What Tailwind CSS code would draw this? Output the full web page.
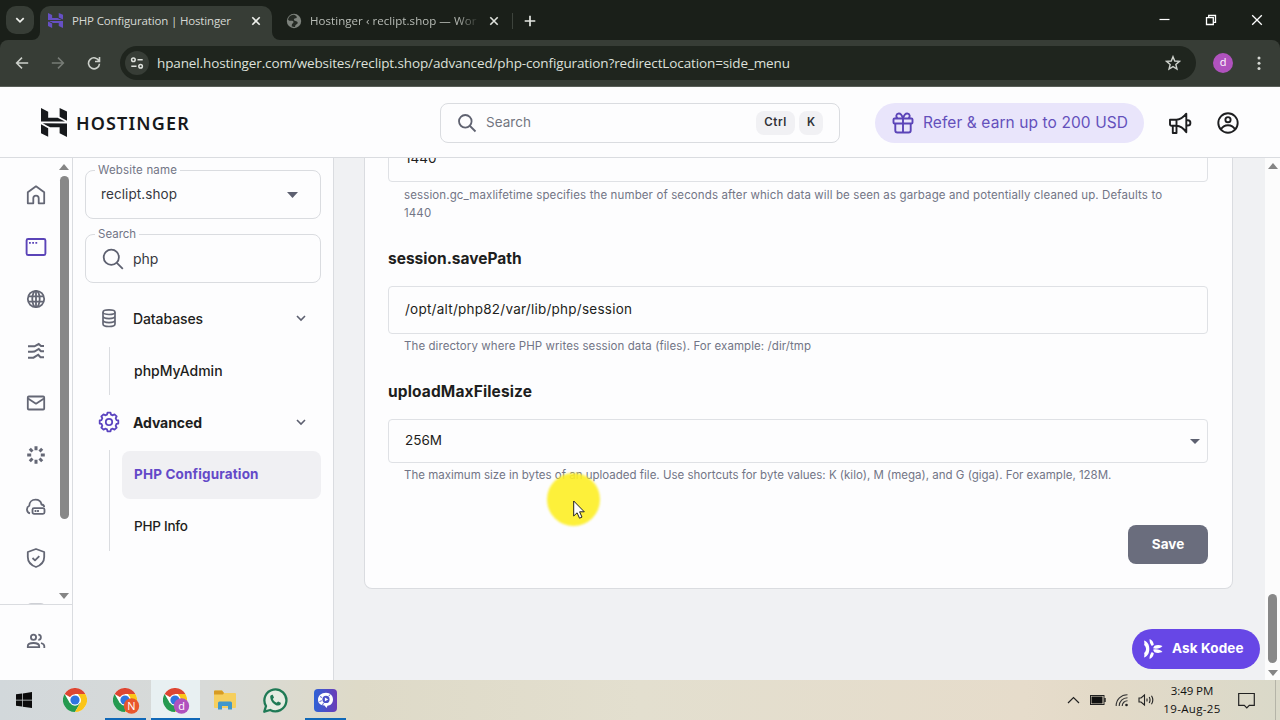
<!DOCTYPE html>
<html lang="en">
<head>
<meta charset="utf-8">
<title>PHP Configuration | Hostinger</title>
<script src="https://cdn.jsdelivr.net/npm/@tailwindcss/browser@4"></script>
</head>
<body class="flex h-[720px] w-[1280px] flex-col overflow-hidden bg-[#fdfdfe] font-['Inter',sans-serif] text-[#1d1e20]">

<!-- Tab strip -->
<div class="flex h-10 shrink-0 items-end bg-[#1a1f19] font-['Open_Sans',sans-serif] text-[11.5px] text-[#d6d9d4]">
  <div class="mb-1.5 ml-1.5 flex size-7 shrink-0 items-center justify-center rounded-[10px] bg-[#373d36]">
    <svg class="size-3" viewBox="0 0 12 12" fill="none" stroke="#eef0ec" stroke-width="1.7"><path d="M2.3 4.2 6 7.9l3.700-3.700"/></svg>
  </div>
  <svg class="-ml-0.5 h-2 w-2" viewBox="0 0 8 8" fill="#373d36"><path d="M8 0v8H0a8 8 0 0 0 8-8Z"/></svg>
  <div class="flex h-[34px] w-[232px] shrink-0 items-center rounded-t-[10px] bg-[#373d36] pb-[5px] pl-2">
    <svg class="h-[15px] w-[15px]" viewBox="1.8 0 20.4 24" preserveAspectRatio="none" fill="#6650c4"><path d="M16.415 0v7.16l5.785 3.384V2.949L16.415 0ZM1.8 0v11.237h18.815L14.89 8.09l-7.457-.003V3.024L1.8 0Zm14.615 20.894v-5.019l-7.514-.005c.007.033-5.82-3.197-5.82-3.197l19.119.091V24l-5.785-3.106ZM1.8 13.551v7.343l5.633 2.949v-6.988L1.8 13.551Z"/></svg>
    <span class="ml-[9px] w-[174px] whitespace-nowrap tracking-[-0.15px]">PHP Configuration | Hostinger</span>
    <svg class="ml-1 size-3" viewBox="0 0 12 12" stroke="#eef0ec" stroke-width="1.6"><path d="m2.3 2.3 7.4 7.4M9.7 2.3 2.3 9.7"/></svg>
  </div>
  <svg class="h-2 w-2" viewBox="0 0 8 8" fill="#373d36"><path d="M0 0v8h8a8 8 0 0 1-8-8Z"/></svg>
  <div class="ml-1.5 flex h-[34px] items-center pb-[5px]">
    <svg class="size-4" viewBox="0 0 16 16"><circle cx="8" cy="8" r="7.2" fill="#7d827c"/><path d="M7.2 1.8C5 2 2.6 3.6 2 6.4c.9 1.3 2.4 1.6 3.6 1.4.9-.2 1.6.2 1.9 1 .2.9-.4 1.4-1.2 1.9-.6.5-.3 1.6-.7 2.6 1 .6 2.5.8 3.4.6.2-1.7.9-2.4 2-2.9 1-.5.9-2-.1-2.5-.9-.5-1.900-.2-2.600-.9-.7-.8-.5-1.800.3-2.200.9-.4 1.800-.1 2.200-1C11.100 3.300 9 1.700 7.200 1.800Z" fill="#252a24"/></svg>
    <span class="ml-2 w-[170px] overflow-hidden whitespace-nowrap tracking-[0.06px] text-[#b9bdb7] [mask-image:linear-gradient(to_right,black_86%,transparent_100%)]">Hostinger ‹ reclipt.shop — Wor</span>
    <svg class="ml-2 size-3" viewBox="0 0 12 12" stroke="#dfe2dd" stroke-width="1.6"><path d="m2.300 2.300 7.400 7.400M9.700 2.300 2.300 9.700"/></svg>
    <div class="ml-3 h-4 w-px bg-[#3d433c]"></div>
    <svg class="ml-[10px] size-[14px]" viewBox="0 0 14 14" stroke="#e3e6e1" stroke-width="1.7"><path d="M7 1.700v10.600M1.700 7h10.600"/></svg>
  </div>
  <div class="ml-auto flex h-10 items-center pr-[17px]">
    <svg class="h-3 w-[11px]" viewBox="0 0 11 12" stroke="#fff" stroke-width="1.2"><path d="M.5 5.500h10"/></svg>
    <svg class="ml-[35px] size-3" viewBox="0 0 12 12" fill="none" stroke="#fff" stroke-width="1.3"><path d="M1.500 3.700h6.800v6.800H1.500zM3.700 3.500V1.500h6.800v6.800H8.500"/></svg>
    <svg class="ml-[34px] size-3" viewBox="0 0 12 12" stroke="#fff" stroke-width="1.3"><path d="m1.200 1.200 9.600 9.600M10.800 1.200l-9.600 9.600"/></svg>
  </div>
</div>

<!-- Toolbar -->
<div class="bg-[#1a1f19]">
<div class="flex h-[47px] items-center rounded-t-lg border-b border-[#595e58] bg-[#373d36] pl-[15px]">
  <svg class="size-[14px]" viewBox="0 0 14 14" fill="none" stroke="#cdd1cb" stroke-width="1.5"><path d="M13.200 7H1.800M7 1.600 1.600 7 7 12.400"/></svg>
  <svg class="ml-[22px] size-[14px]" viewBox="0 0 14 14" fill="none" stroke="#777c76" stroke-width="1.5"><path d="M.8 7h11.400M7 1.600 12.400 7 7 12.400"/></svg>
  <svg class="ml-[22px] size-[14px]" viewBox="0 0 14 14" fill="none" stroke="#cdd1cb" stroke-width="1.6"><path d="M12.100 5.200A5.500 5.500 0 1 0 12.500 7.700M12.500 1v4.500H8"/></svg>
  <div class="ml-[19px] flex h-[34px] w-[1076px] items-center rounded-full bg-[#1f251e] pl-[5px] pr-4">
    <div class="flex size-6 items-center justify-center rounded-full bg-[#373d36]">
      <svg class="size-[14px]" viewBox="0 0 14 14" fill="none" stroke="#dfe2dd" stroke-width="1.5"><circle cx="3.4" cy="3.7" r="1.8"/><path d="M7.500 3.700h5.200M1.300 10.300h5.200"/><circle cx="10.6" cy="10.3" r="1.8"/></svg>
    </div>
    <span class="ml-2 whitespace-nowrap font-['Open_Sans',sans-serif] text-[13.5px] tracking-[-0.122px] text-[#dde0db]">hpanel.hostinger.com/websites/reclipt.shop/advanced/php-configuration?redirectLocation=side_menu</span>
    <svg class="-mr-px ml-auto size-4" viewBox="0 0 16 16" fill="none" stroke="#cdd1cb" stroke-width="1.4"><path d="m8 1.700 1.750 4.350 4.650.35-3.550 3.050 1.100 4.550L8 11.550 4.050 14l1.100-4.550L1.600 6.400l4.650-.35z"/></svg>
  </div>
  <div class="ml-[17px] flex size-5 items-center justify-center rounded-full bg-[#b052be] pb-px font-['Open_Sans',sans-serif] text-[11px] text-white">d</div>
  <svg class="ml-[18px] h-4 w-[15px]" viewBox="0 0 15 16" fill="#d5d8d3"><circle cx="8" cy="3" r="1.5"/><circle cx="8" cy="8.2" r="1.5"/><circle cx="8" cy="13.4" r="1.5"/></svg>
</div>
</div>

<!-- Site header -->
<header class="flex h-[71px] shrink-0 items-center border-b border-[#dadce0] bg-[#fdfdfe] pl-10 pt-px">
  <div class="flex w-[400px] items-center">
    <svg class="ml-px h-[29px] w-[26px]" viewBox="1.8 0 20.4 24" preserveAspectRatio="none" fill="#17191c"><path d="M16.415 0v7.160l5.785 3.384V2.949L16.415 0ZM1.800 0v11.237h18.815L14.890 8.090l-7.457-.003V3.024L1.800 0Zm14.615 20.894v-5.019l-7.514-.005c.007.033-5.820-3.197-5.820-3.197l19.119.091V24l-5.785-3.106ZM1.800 13.551v7.343l5.633 2.949v-6.988L1.800 13.551Z"/></svg>
    <span class="ml-[9px] font-['Noto_Sans',sans-serif] text-[18px] font-semibold leading-6 tracking-[1.15px] text-[#17191c]">HOSTINGER</span>
  </div>
  <div class="flex h-10 w-[400px] items-center rounded-lg border border-[#dadce0] px-4">
    <svg class="size-5" viewBox="0 0 20 20" fill="none" stroke="#5f6270" stroke-width="1.8"><circle cx="8.3" cy="8.3" r="6.3"/><path d="m13 13 5.500 5.500"/></svg>
    <span class="ml-[9px] text-[13.5px] tracking-[0.04px] text-[#727580]">Search</span>
    <span class="ml-auto flex h-6 items-center rounded-lg bg-[#f1f1f4] px-2 text-[11.5px] font-semibold tracking-[0.6px] text-[#303238]">Ctrl</span>
    <span class="ml-1 flex size-6 items-center justify-center rounded-lg bg-[#f1f1f4] text-[11.5px] font-semibold text-[#303238]">K</span>
  </div>
  <div class="ml-[35px] flex h-10 w-[269px] items-center rounded-full bg-[#e9e5fb] pl-4 text-[#6450bb]">
    <svg class="size-6" viewBox="0 0 24 24" fill="none" stroke="#5b44b8" stroke-width="1.9"><rect x="2.5" y="7.500" width="19" height="5" rx="1"/><path d="M4.300 12.500v7a2 2 0 0 0 2 2h11.400a2 2 0 0 0 2-2v-7M12 7.500v14M12 7.500C11 4 9.500 2.500 7.800 2.500a2.500 2.500 0 0 0-1.200 4.700M12 7.500c1-3.500 2.500-5 4.200-5a2.500 2.500 0 0 1 1.200 4.700"/></svg>
    <span class="ml-2 whitespace-nowrap text-[15.5px] tracking-[0.09px]">Refer &amp; earn up to 200 USD</span>
  </div>
  <svg class="ml-6 size-6" viewBox="0 0 24 24" fill="none" stroke="#1d1e20" stroke-width="1.9" stroke-linejoin="round"><path d="M2 8.700h6.500v6H3.500A1.500 1.500 0 0 1 2 13.200zM8.500 8.700c4 0 7-2.500 9.800-6v18.500c-2.800-4-5.800-6.500-9.800-6.500M4.800 14.700v7.300h3.700v-7.300M18.300 9.300h1.500a2.600 2.600 0 0 1 0 5.200h-1.500"/></svg>
  <svg class="ml-6 size-6" viewBox="0 0 24 24" fill="none" stroke="#1d1e20" stroke-width="1.9"><circle cx="12" cy="12" r="9.7"/><circle cx="12" cy="8.7" r="2.6"/><path d="M5 18.500c1.500-3 4-4.200 7-4.200s5.500 1.200 7 4.200"/></svg>
</header>

<!-- Page -->
<div class="flex min-h-0 flex-1">

  <!-- Icon rail -->
  <nav class="flex w-[73px] shrink-0 flex-col border-r border-[#dadce0] text-[#646775]">
    <div class="flex h-[446px] shrink-0 overflow-hidden">
      <div class="w-[57px] pl-[14px] pt-[11px]">
        <div class="flex h-[52px] w-11 items-center justify-center"><svg class="size-6" viewBox="0 0 24 24" fill="none" stroke="currentColor" stroke-width="1.8" stroke-linejoin="round"><path d="M3.800 9.300 12 3.300l8.200 6v11h-5.500v-5a2.700 2.700 0 0 0-5.400 0v5H3.800z"/></svg></div>
        <div class="flex h-[52px] w-11 items-center justify-center text-[#5b44b8]"><svg class="size-6" viewBox="0 0 24 24" fill="none" stroke="currentColor" stroke-width="1.9"><rect x="2.600" y="4" width="18.800" height="16" rx="1.500"/><path d="M5 7.900h1.800M8.200 7.900H10M11.400 7.900h1.800" stroke-width="1.6"/></svg></div>
        <div class="flex h-[52px] w-11 items-center justify-center"><svg class="size-6" viewBox="0 0 24 24" fill="none" stroke="currentColor" stroke-width="1.8"><circle cx="12" cy="12" r="8.2"/><ellipse cx="12" cy="12" rx="3.7" ry="8.2"/><path d="M4 9.300h16M4 14.700h16M12 3.800v16.400"/></svg></div>
        <div class="flex h-[52px] w-11 items-center justify-center"><svg class="size-6" viewBox="0 0 24 24" fill="none" stroke="currentColor" stroke-width="2"><path d="M4 7.300h6.500l4.200-2.300 2.300 2h3M4 12.800h4l2.500-.3 4.200-2.500 2.300 2.300h3M4 18.700h5.500l4.700-3 2.300 2.500H20"/></svg></div>
        <div class="flex h-[52px] w-11 items-center justify-center"><svg class="size-6" viewBox="0 0 24 24" fill="none" stroke="currentColor" stroke-width="1.8" stroke-linejoin="round"><rect x="3.800" y="5.500" width="16.400" height="13" rx="1"/><path d="m4 7.500 8 5.200 8-5.200"/></svg></div>
        <div class="flex h-[52px] w-11 items-center justify-center"><svg class="size-6" viewBox="0 0 24 24" fill="none" stroke="currentColor" stroke-width="3"><path d="M12 3.200v4M12 16.800v4M3.200 12h4M16.800 12h4M5.800 5.800l2.700 2.700M15.500 15.500l2.700 2.700M5.800 18.200l2.700-2.700M15.500 8.500l2.700-2.700"/></svg></div>
        <div class="flex h-[51px] w-11 items-center justify-center"><svg class="size-6" viewBox="0 0 24 24" fill="none" stroke="currentColor" stroke-width="1.8" stroke-linejoin="round"><path d="M6 18.300a4 4 0 0 1-.7-7.500C5.300 7 8 4.700 11.500 4.700c3.200 0 5.500 2 6 4.800 1.500.2 2.600 1.200 2.700 2.500"/><rect x="8.500" y="13.200" width="12" height="5.600" rx="1.500"/><path d="M11.500 15v2M14 15v2"/></svg></div>
        <div class="flex h-[52px] w-11 items-center justify-center"><svg class="size-6" viewBox="0 0 24 24" fill="none" stroke="currentColor" stroke-width="1.8" stroke-linejoin="round"><path d="M12 3 20.200 6v5c0 4.800-3.200 8.200-8.200 10-5-1.800-8.200-5.200-8.200-10V6z"/><path d="m8.500 12 2.500 2.400 4.300-4.300"/></svg></div>
        <div class="flex h-[52px] w-11 items-center justify-center"><svg class="size-6" viewBox="0 0 24 24" fill="none" stroke="#bfc1c8" stroke-width="1.600"><rect x="4" y="6" width="16" height="14" rx="3"/></svg></div>
      </div>
      <div class="flex w-[14px] flex-col items-center pt-[6px]">
        <svg class="h-[6px] w-[10px]" viewBox="0 0 10 6" fill="#858585"><path d="m5 0 5 6H0z"/></svg>
        <div class="mt-[6px] h-[343px] w-[9px] rounded-full bg-[#888]"></div>
        <svg class="mt-[74px] h-[6px] w-[10px] shrink-0" viewBox="0 0 10 6" fill="#858585"><path d="M0 0h10L5 6z"/></svg>
      </div>
    </div>
    <div class="flex flex-1 items-start justify-center border-t border-[#dadce0] pt-6">
      <svg class="size-6" viewBox="0 0 24 24" fill="none" stroke="currentColor" stroke-width="1.8"><circle cx="9.5" cy="8.3" r="2.6"/><path d="M3.800 18.200v-1.200c0-1.800 2.700-3 5.700-3s5.700 1.200 5.700 3v1.200zM14.300 5.700a2.600 2.600 0 0 1 0 5.200M17 14c2.200.7 3.300 1.700 3.300 3v2"/></svg>
    </div>
  </nav>

  <!-- Section menu -->
  <aside class="w-[261px] shrink-0 border-r border-[#dadce0] px-3 pt-3 text-[14px]">
    <div class="relative flex h-[49px] w-[236px] items-center justify-between rounded-lg border border-[#dadce0] pl-[15px] pr-[22px] text-[#36383f]">
      <span class="absolute -top-[9px] left-[9px] bg-[#fdfdfe] px-[3px] text-[11.5px] leading-4 tracking-[0.18px] text-[#727586]">Website name</span>
      <span class="text-[13.5px] tracking-[0.09px]">reclipt.shop</span>
      <svg class="h-[6px] w-[11px]" viewBox="0 0 11 6" fill="#5d6070"><path d="M0 0h11L5.500 6z"/></svg>
    </div>
    <div class="relative mt-[15px] flex h-[49px] w-[236px] items-center rounded-lg border border-[#dadce0] pl-[15px] text-[#36383f]">
      <span class="absolute -top-[9px] left-[9px] bg-[#fdfdfe] px-[3px] text-[11.5px] leading-4 text-[#727586]">Search</span>
      <svg class="size-6" viewBox="0 0 24 24" fill="none" stroke="#5d6070" stroke-width="1.8"><circle cx="10.3" cy="10.3" r="7.6"/><path d="m15.800 15.800 6 6"/></svg>
      <span class="ml-2 pb-px">php</span>
    </div>

    <div class="mt-[11px] flex h-12 items-center pl-3 pr-[14px]">
      <svg class="size-6" viewBox="0 0 24 24" fill="none" stroke="#646775" stroke-width="1.7"><ellipse cx="12" cy="6.200" rx="6" ry="2.300"/><path d="M6 6.200v11.800c0 1.400 2.700 2.500 6 2.500s6-1.100 6-2.500V6.200M6 10.100c0 1.400 2.700 2.500 6 2.500s6-1.100 6-2.500M6 14.100c0 1.400 2.700 2.500 6 2.500s6-1.100 6-2.500"/></svg>
      <span class="ml-3 font-medium tracking-[-0.1px]">Databases</span>
      <svg class="ml-auto size-3" viewBox="0 0 12 12" fill="none" stroke="#5d6070" stroke-width="1.6"><path d="m2 4 4 4 4-4"/></svg>
    </div>
    <div class="ml-6 mt-[5px] flex h-12 items-center border-l border-[#dadce0] pb-0.5 pl-6 font-medium">phpMyAdmin</div>
    <div class="mt-[3px] flex h-12 items-center pl-3 pr-[14px]">
      <svg class="size-6" viewBox="-12 -12 24 24" fill="none" stroke="#5b44c0" stroke-width="1.8" stroke-linejoin="round"><circle r="3.2"/><path d="M7.440-1.990 9.300-1.530V1.530L7.440 1.990 6.670 3.850 7.660 5.490 5.490 7.660 3.850 6.670 1.990 7.440 1.530 9.300H-1.530L-1.990 7.440-3.850 6.670-5.490 7.660-7.660 5.490-6.670 3.850-7.440 1.990-9.300 1.530V-1.530L-7.440-1.990-6.670-3.850-7.660-5.490-5.490-7.660-3.850-6.670-1.990-7.440-1.530-9.300H1.530L1.990-7.440 3.850-6.670 5.490-7.660 7.660-5.490 6.670-3.850Z"/></svg>
      <span class="ml-3 font-bold tracking-[-0.09px]">Advanced</span>
      <svg class="ml-auto size-3" viewBox="0 0 12 12" fill="none" stroke="#5d6070" stroke-width="1.6"><path d="m2 4 4 4 4-4"/></svg>
    </div>
    <div class="ml-6 mt-1 flex w-[212px] flex-col gap-1 border-l border-[#dadce0] pl-3">
      <div class="mt-px flex h-12 items-center rounded-lg bg-[#f0f0f3] pb-px pl-3 text-[13.5px] font-bold tracking-[0.16px] text-[#6349c8]">PHP Configuration</div>
      <div class="flex h-12 items-center pb-0.5 pl-3 text-[13.5px] font-medium tracking-[-0.24px]">PHP Info</div>
    </div>
  </aside>

  <!-- Settings form -->
  <main class="relative flex flex-1 justify-between overflow-hidden bg-[#f0f1f3]">
    <div class="-mt-[25px] ml-[30px] flex h-[456px] w-[869px] flex-col rounded-b-lg border border-t-0 border-[#dadce0] bg-[#fdfdfe] pl-[23px] pr-6 text-[13.5px]">
      <div class="mt-px flex h-12 shrink-0 items-center rounded border border-[#dfe1e5] pl-4">1440</div>
      <p class="mt-1 whitespace-nowrap pl-4 text-[11.5px] leading-[18px] tracking-[0.118px] text-[#727586]">session.gc_maxlifetime specifies the number of seconds after which data will be seen as garbage and potentially cleaned up. Defaults to<br>1440</p>
      <h3 class="mt-6 text-[15.5px] font-bold leading-6 pt-px">session.savePath</h3>
      <div class="mt-[15px] flex h-12 shrink-0 items-center rounded border border-[#dfe1e5] pb-0.5 pl-4 tracking-[0.24px]">/opt/alt/php82/var/lib/php/session</div>
      <p class="mt-[3px] pl-4 text-[11.5px] leading-[18px] tracking-[0.08px] text-[#727586]">The directory where PHP writes session data (files). For example: /dir/tmp</p>
      <h3 class="mt-6 pt-px text-[15.5px] font-bold leading-6 tracking-[0.13px]">uploadMaxFilesize</h3>
      <div class="mt-[15px] flex h-11 shrink-0 items-center justify-between rounded border border-[#dfe1e5] pb-0.5 pl-4 pr-[7px]">
        <span>256M</span>
        <svg class="mt-0.5 h-[5px] w-[10px]" viewBox="0 0 10 5" fill="#5d6070"><path d="M0 0h10L5 5z"/></svg>
      </div>
      <p class="mt-[3px] whitespace-nowrap pl-4 text-[11.5px] leading-[18px] text-[#727586]">The maximum size in bytes of an uploaded file. Use shortcuts for byte values: K (kilo), M (mega), and G (giga). For example, 128M.</p>
      <button class="mt-[41px] h-[39px] w-20 self-end rounded-lg bg-[#6a6d7d] text-[13.5px] font-bold text-white">Save</button>
    </div>

    <div class="flex w-[15px] flex-col items-center justify-end bg-[#fcfcfc] pb-1">
      <svg class="mb-auto mt-[5px] h-[6px] w-[10px]" viewBox="0 0 10 6" fill="#858585"><path d="m5 0 5 6H0z"/></svg>
      <div class="h-[69px] w-[9px] rounded-full bg-[#888]"></div>
      <svg class="mt-[7px] h-[6px] w-[10px]" viewBox="0 0 10 6" fill="#858585"><path d="M0 0h10L5 6z"/></svg>
    </div>

    <button class="absolute bottom-[11px] right-5 flex h-10 w-32 items-center rounded-full bg-[#6747e6] pl-3 text-[13.5px] font-bold tracking-[0.11px] text-white">
      <svg class="h-5 w-[19px]" viewBox="0 0 19 20" fill="#fff"><path d="M0 1.500c3.800 1.200 5.300 4.500 5.300 8.500S3.800 17.300 0 18.500c.6-2 .4-3.500.1-4.500C1.800 12.500 2 11 2 10S1.800 7.500.1 6C.4 5 .6 3.500 0 1.500ZM5.600 0c2.500 1.200 4 3.200 4.200 5.800l-2 1.200C6.400 5 5.300 3 5.600 0Zm0 20c2.500-1.200 4-3.200 4.200-5.800l-2-1.200C6.400 15 5.300 17 5.600 20ZM9 9.300l1.500-2.500c2.500-1 5-.9 8 .1-2 2.300-5.500 3.300-9.500 2.400Zm0 1.400 1.500 2.500c2.500 1 5 .9 8-.1-2-2.300-5.500-3.300-9.500-2.400Z"/></svg>
      <span class="ml-[9px] whitespace-nowrap pb-px">Ask Kodee</span>
    </button>

    <!-- Click highlight and pointer -->
    <div class="absolute left-[213px] top-[315px] size-[53px] rounded-full bg-[#fdee25]/90 blur-[0.8px]"></div>
    <svg class="absolute left-[239px] top-[342px] h-[20px] w-[14px]" viewBox="0 0 14 20" fill="#fff" stroke="#222" stroke-width="1"><path d="M.7 1v15l3.400-3.200 2.400 5.400 2.500-1.100-2.400-5.300h4.700z"/></svg>
  </main>
</div>

<!-- Taskbar -->
<footer class="flex h-10 shrink-0 items-stretch bg-[linear-gradient(to_right,#d2d8db_0%,#d8dad8_16%,#dedac8_28%,#e3dfcf_50%,#e6dccb_80%,#e3dac8_86%,#dad9c9_100%)]">
  <div class="flex w-12 items-center justify-center"><svg class="size-4" viewBox="0 0 16 16" fill="#0b0b0b"><path d="M0 2.300 6 1.500v6.200H0zM6.700 1.400 16 0v7.700H6.700zM0 8.400h6v6.200L0 13.700zM6.700 8.400H16V16l-9.300-1.300z"/></svg></div>
  <div class="flex w-[54px] items-center justify-center"><svg class="size-6" viewBox="0 0 24 24"><use href="#chrome"/></svg></div>
  <div class="ml-[3px] mr-[5px] flex w-[41px] items-center justify-center border-b-2 border-[#1068b8]"><svg class="ml-0.5 mt-[5px] h-[27px] w-[27px]" viewBox="0 0 27 27"><use href="#chrome" width="24" height="24"/><circle cx="18.500" cy="18" r="7.700" fill="#e8562c"/><text x="18.500" y="22.200" text-anchor="middle" font-size="11" font-family="Open Sans, sans-serif" fill="#fff">N</text></svg></div>
  <div class="flex w-[49px] items-center justify-center border-b-2 border-[#1068b8] bg-[#e8f0f2]"><svg class="ml-0.5 mt-[5px] h-[27px] w-[27px]" viewBox="0 0 27 27"><use href="#chrome" width="24" height="24"/><circle cx="18.500" cy="18" r="7.700" fill="#b052be"/><text x="18.500" y="22" text-anchor="middle" font-size="11" font-family="Open Sans, sans-serif" fill="#fff">d</text></svg></div>
  <div class="flex w-[50px] items-center justify-center"><svg class="h-5 w-6" viewBox="0 0 24 20"><path d="M1 1.500A1 1 0 0 1 2 .500h7l2 2.500h11a1 1 0 0 1 1 1V17a1 1 0 0 1-1 1H2a1 1 0 0 1-1-1z" fill="#f6cf5e"/><path d="M1 1.500A1 1 0 0 1 2 .500h7l2 2.500-1 1.500H1z" fill="#d79b23"/><path d="M5 19.500V13a1.500 1.500 0 0 1 1.500-1.500h11A1.500 1.500 0 0 1 19 13v6.500h-4V16H9v3.500z" fill="#3f97cc"/></svg></div>
  <div class="flex w-[50px] items-center justify-center"><svg class="h-[25px] w-[25px]" viewBox="0 0 25 25"><path d="M1.300 23.700 3 18A11 11 0 1 1 7.200 22z" fill="#e6ece2" stroke="#1f7a55" stroke-width="2.300" stroke-linejoin="round"/><path d="M7.200 8.500c.4-1.500 1.700-2.200 2.500-1.700l1.300 2.700-1.200 1.600c.8 1.700 2 2.900 3.800 3.700l1.500-1.400 2.700 1.300c.3 1.500-.8 2.800-2.500 2.900-4.200 0-8.200-4.800-8.100-9.100z" fill="#1f7a55"/></svg></div>
  <div class="ml-[5px] flex w-[41px] items-center justify-center border-b-2 border-[#1068b8]">
    <svg class="mt-0.5 h-[23px] w-[23px]" viewBox="0 0 23 23"><rect width="23" height="23" rx="4" fill="url(#app)"/><path d="M12 3.700c4.300 0 7 3 7 6.700s-2.500 6-5.500 6.300l-1 2.300-2-2.500C6.300 16.300 4 14 4 10.500s3.300-6.800 8-6.800z" fill="#fff"/><circle cx="12" cy="10.400" r="3.600" fill="#4b50c8"/><path d="m10.900 8.500 3.300 1.900-3.300 1.900z" fill="#fff"/><path d="M6 7.500l2 1M5.500 12.500l2.300-.8M8.500 16l1-2M16 5.500l-1.300 1.800" stroke="#4b50c8" stroke-width=".9"/></svg>
  </div>

  <div class="ml-auto flex items-center font-['Open_Sans',sans-serif] text-[#111]">
    <svg class="h-3 w-[13px]" viewBox="0 0 13 12" fill="none" stroke="#222" stroke-width="1.200"><path d="M1 9l5.500-5.500L12 9"/></svg>
    <svg class="ml-[10px] h-[10px] w-[16px]" viewBox="0 0 16 10"><rect x=".5" y=".5" width="13.500" height="9" fill="none" stroke="#222"/><rect x="1.500" y="1.500" width="11" height="7" fill="#111"/><path d="M15 3v4" stroke="#111" stroke-width="1.300"/></svg>
    <svg class="ml-[9px] h-[14px] w-[14px]" viewBox="0 0 14 14" fill="none" stroke="#333" stroke-width="1.100"><path d="M1.200 13A11 11 0 0 1 12.500 1.700M4.200 13a8.300 8.300 0 0 1 8.300-8.300M7.200 13a5.300 5.300 0 0 1 5.300-5.300"/><circle cx="11.500" cy="12" r="1.300" fill="#222" stroke="none"/></svg>
    <svg class="ml-[9px] h-[14px] w-[16px]" viewBox="0 0 16 14" fill="none" stroke="#222" stroke-width="1.100"><path d="M1 5h2l3.500-3v10L3 9H1zM9 5.500v3M11.200 4c1 1.800 1 4.200 0 6M13.500 2.700c1.600 2.600 1.600 6 0 8.600"/></svg>
    <div class="ml-[9px] w-[58px] text-center text-[11.5px] leading-[18px]"><div class="tracking-[-0.08px]">3:49 PM</div><div class="tracking-[0.34px]">19-Aug-25</div></div>
    <svg class="ml-[17px] h-[17px] w-[17px]" viewBox="0 0 17 17" fill="none" stroke="#222" stroke-width="1.200"><path d="M.7 1.500h15.600v11.800h-5l-2.500 2.500-2.500-2.500H.7z"/></svg>
    <div class="ml-5 mr-1 h-10 w-px bg-[#b5b4a8]"></div>
  </div>
</footer>

<!-- Shared symbols -->
<svg class="absolute size-0" aria-hidden="true">
  <defs>
    <linearGradient id="app" x1="0" x2="1"><stop offset="0" stop-color="#2f62d6"/><stop offset="1" stop-color="#6b3cb8"/></linearGradient>
    <symbol id="chrome" viewBox="0 0 24 24">
      <circle cx="12" cy="12" r="12" fill="#fff"/>
      <path d="M12 12 1.600 6A12 12 0 0 1 22.400 6H12z" fill="#dd4632"/>
      <path d="M1.600 6A12 12 0 0 0 12 24l5.200-9L12 12 6.800 15z" fill="#259a50"/>
      <path d="M22.400 6A12 12 0 0 1 12 24l5.200-9L18 12l-3-6z" fill="#fbc518"/>
      <circle cx="12" cy="12" r="5.800" fill="#fff"/><circle cx="12" cy="12" r="4.600" fill="#2f74e0"/>
    </symbol>
  </defs>
</svg>
</body>
</html>
